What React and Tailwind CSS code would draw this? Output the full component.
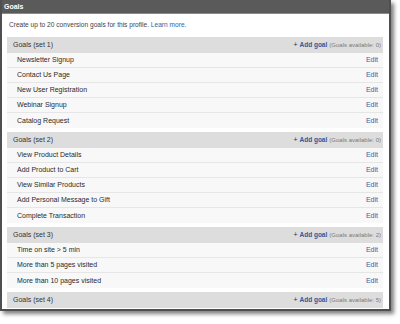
import React from "react";

const groups = [
  { name: "Goals (set 1)", avail: 0, rows: ["Newsletter Signup", "Contact Us Page", "New User Registration", "Webinar Signup", "Catalog Request"] },
  { name: "Goals (set 2)", avail: 0, rows: ["View Product Details", "Add Product to Cart", "View Similar Products", "Add Personal Message to Gift", "Complete Transaction"] },
  { name: "Goals (set 3)", avail: 2, rows: ["Time on site > 5 min", "More than 5 pages visited", "More than 10 pages visited"] },
  { name: "Goals (set 4)", avail: 5, rows: [] },
];

export default function App() {
  return (
    <div className="w-[400px] h-[324px] bg-white overflow-hidden" style={{ fontFamily: '"Liberation Sans", Arial, sans-serif' }}>
      <div className="w-[391px] border-x-2 border-b-2 border-[#4f4f4f] bg-white shadow-[3px_3px_4px_rgba(0,0,0,0.5)]">
        <div className="h-[14px] bg-[#5a5a5a] border-b border-[#8a8a8a] text-white font-bold text-[7px] leading-[13px] pl-[2px]">Goals</div>
        <div className="pl-[5px] pr-[6px] pb-[1px]">
          <p className="h-[23px] pt-[6px] pl-[2px] text-[6.6px] leading-[10px] text-[#444]">
            Create up to 20 conversion goals for this profile. <span className="text-[#2f64a8]">Learn more.</span>
          </p>
          {groups.map((g, gi) => (
            <div key={gi} className={gi < groups.length - 1 ? "mb-[4px]" : ""}>
              <div className="h-[16px] bg-[#dddddd] flex items-center justify-between pl-[6px] pr-[2px] pt-[1px] text-[7px] text-[#333]">
                <span>{g.name}</span>
                <span className="flex items-baseline gap-[2px]">
                  <span className="text-[#333] text-[7px]">+</span>
                  <span className="text-[#2a5a9c] font-bold text-[6.5px]">Add goal</span>
                  <span className="text-[#7a7a7a] text-[6px]">(Goals available: {g.avail})</span>
                </span>
              </div>
              {g.rows.map((r, ri) => (
                <div key={ri} className={"h-[15px] bg-[#f8f8f8] flex items-center justify-between pl-[10px] pr-[5px] pt-[1px] text-[7px] text-[#2a2a2a]" + (ri < g.rows.length - 1 ? " border-b border-[#e6e6e6]" : "")}>
                  <span>{r}</span>
                  <span className="text-[#2a64b0]">Edit</span>
                </div>
              ))}
            </div>
          ))}
        </div>
      </div>
    </div>
  );
}
